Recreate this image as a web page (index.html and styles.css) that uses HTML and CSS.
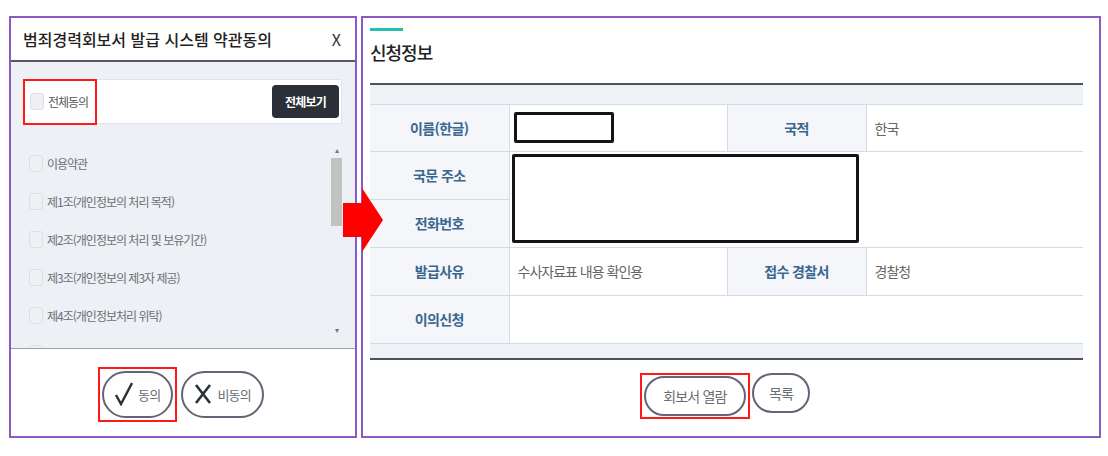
FILE: index.html
```html
<!DOCTYPE html>
<html lang="ko">
<head>
  <meta charset="UTF-8" />
  <meta name="viewport" content="width=device-width, initial-scale=1.0"/>
  <title>범죄경력회보서 발급 시스템</title>
  <link rel="stylesheet" href="styles.css">
</head>
<body>
  <div class="stage">

    <div class="modal">
      <div class="modal-head">
        <h2>범죄경력회보서 발급 시스템 약관동의</h2>
        <span class="close">X</span>
      </div>

      <div class="modal-body">
        <div class="all-box">
          <label class="all-check"><span class="chk"></span>전체동의</label>
          <button class="btn-dark">전체보기</button>
        </div>

        <div class="terms">
          <ul class="terms-list">
            <li><span class="chk"></span>이용약관</li>
            <li><span class="chk"></span>제1조(개인정보의 처리 목적)</li>
            <li><span class="chk"></span>제2조(개인정보의 처리 및 보유기간)</li>
            <li><span class="chk"></span>제3조(개인정보의 제3자 제공)</li>
            <li><span class="chk"></span>제4조(개인정보처리 위탁)</li>
            <li><span class="chk"></span></li>
          </ul>
          <div class="scroll">
            <span class="arr">&#9652;</span>
            <div class="track"><div class="thumb"></div></div>
            <span class="arr">&#9662;</span>
          </div>
        </div>
      </div>

      <div class="modal-foot">
        <div class="hl">
          <button class="pill">
            <svg width="18" height="24" viewBox="0 0 18 24"><path d="M1 13 L6 22 L17 1" fill="none" stroke="#2b2f36" stroke-width="2.4"/></svg>
            동의
          </button>
        </div>
        <button class="pill">
          <svg width="18" height="22" viewBox="0 0 18 22"><path d="M2 2 L16 20 M16 2 L2 20" fill="none" stroke="#2b2f36" stroke-width="2.6"/></svg>
          비동의
        </button>
      </div>
    </div>

    <div class="panel">
      <div class="panel-inner">
        <div class="teal"></div>
        <h3>신청정보</h3>

        <table class="info">
          <colgroup>
            <col class="c-head">
            <col class="c-val">
            <col class="c-head">
            <col class="c-val2">
          </colgroup>
          <tr class="band"><td colspan="4"></td></tr>
          <tr class="r1">
            <th>이름(한글)</th>
            <td><div class="mask small"></div></td>
            <th>국적</th>
            <td>한국</td>
          </tr>
          <tr>
            <th>국문 주소</th>
            <td colspan="3" rowspan="2" class="merged"><div class="mask big"></div></td>
          </tr>
          <tr>
            <th>전화번호</th>
          </tr>
          <tr>
            <th>발급사유</th>
            <td>수사자료표 내용 확인용</td>
            <th>접수 경찰서</th>
            <td>경찰청</td>
          </tr>
          <tr>
            <th>이의신청</th>
            <td colspan="3"></td>
          </tr>
          <tr class="band bottom"><td colspan="4"></td></tr>
        </table>

        <div class="actions">
          <div class="hl">
            <button class="pill wide">회보서 열람</button>
          </div>
          <button class="pill">목록</button>
        </div>
      </div>
    </div>

    <svg class="arrow" width="41" height="64" viewBox="0 0 41 64">
      <polygon points="0,15 19,15 19,0 40,32 19,64 19,49 0,49" fill="#ff0000"/>
    </svg>
  </div>
</body>
</html>
```

FILE: styles.css
```css
* {
  box-sizing: border-box;
  margin: 0;
  padding: 0;
  font-family: "Noto Sans CJK KR", "Noto Sans", sans-serif;
}

body {
  background-color: white;
  width: 1108px;
  height: 456px;
  overflow: hidden;
}

.stage {
  position: relative;
  display: flex;
  gap: 4px;
  padding: 16px 0 0 9px;
}

/* left : terms modal */

.modal {
  width: 348px;
  height: 422px;
  border: 2px solid #8c58c2;
  display: flex;
  flex-direction: column;
}

.modal-head {
  height: 44px;
  display: flex;
  align-items: center;
  justify-content: space-between;
  padding: 0 14px 0 12px;
  border-bottom: 2px solid #555a60;
}

.modal-head h2 {
  font-size: 16px;
  font-weight: 500;
  letter-spacing: 0;
  color: #222;
}

.close {
  font-size: 16px;
  color: #333;
}

.modal-body {
  flex: 1;
  background-color: #edf0f5;
  padding: 17px 13px 0;
  border-bottom: 1px solid #9aa0a8;
}

.all-box {
  height: 45px;
  background-color: white;
  border: 1px solid #dde3ec;
  display: flex;
  align-items: center;
  justify-content: space-between;
  padding-right: 2px;
}

.all-check {
  display: flex;
  align-items: center;
  gap: 4px;
  height: 46px;
  width: 74px;
  margin-left: -2px;
  padding-left: 5px;
  border: 2px solid #ff1a1a;
  font-size: 12px;
  color: #555;
  letter-spacing: -1px;
}

.chk {
  display: inline-block;
  width: 14px;
  height: 17px;
  background-color: #eef0f3;
  border: 1px solid #dcdfe4;
  border-radius: 3px;
  flex-shrink: 0;
}

.btn-dark {
  width: 67px;
  height: 33px;
  border: none;
  border-radius: 4px;
  background-color: #2b2f38;
  color: white;
  font-size: 12px;
  font-weight: bold;
  letter-spacing: -0.8px;
}

.terms {
  margin-top: 20px;
  height: 204px;
  display: flex;
  overflow: hidden;
}

.terms-list {
  flex: 1;
  list-style: none;
  padding-left: 5px;
}

.terms-list li {
  height: 38px;
  display: flex;
  align-items: center;
  gap: 4px;
  font-size: 12px;
  color: #6d6f73;
  letter-spacing: -1px;
}

.scroll {
  width: 11px;
  height: 192px;
  display: flex;
  flex-direction: column;
  align-items: center;
}

.arr {
  font-size: 8px;
  line-height: 12px;
  color: #777;
}

.track {
  flex: 1;
  width: 100%;
  padding-top: 2px;
}

.thumb {
  width: 100%;
  height: 68px;
  background-color: #c2c2c2;
}

.modal-foot {
  flex: 1;
  display: flex;
  align-items: center;
  justify-content: center;
  gap: 4px;
  padding: 3px 4px 0 0;
}

.hl {
  border: 2px solid #ff1a1a;
  padding: 2px;
}

.pill {
  height: 47px;
  padding: 0 11px;
  border: 2px solid #5f6675;
  border-radius: 24px;
  background-color: white;
  display: flex;
  align-items: center;
  gap: 5px;
  font-size: 13px;
  color: #6a6d72;
  letter-spacing: -0.8px;
}

/* right : application info */

.panel {
  width: 740px;
  height: 422px;
  border: 2px solid #8c58c2;
}

.panel-inner {
  padding: 10px 16px 0 7px;
}

.teal {
  width: 33px;
  height: 3px;
  background-color: #26bfae;
}

.panel-inner h3 {
  margin-top: 8px;
  font-size: 18px;
  font-weight: 500;
  line-height: 26px;
  letter-spacing: -1px;
  color: #222;
}

.info {
  margin-top: 18px;
  width: 713px;
  border-collapse: collapse;
  table-layout: fixed;
  border-top: 2px solid #4e5256;
  border-bottom: 2px solid #4e5256;
}

.c-head {
  width: 139px;
}

.c-val {
  width: 218px;
}

.c-val2 {
  width: 217px;
}

.info th,
.info td {
  height: 48px;
  border-bottom: 1px solid #d3dbe7;
  font-size: 14px;
  letter-spacing: -1px;
}

.info th {
  background-color: #f4f6f9;
  color: #3b6690;
  font-weight: bold;
  letter-spacing: -0.6px;
  border-right: 1px solid #d3dbe7;
}

.info td {
  color: #666;
  padding-left: 8px;
  border-right: 1px solid #d3dbe7;
}

.info td:last-child {
  border-right: none;
}

.info .r1 th,
.info .r1 td {
  height: 47px;
}

.info tr.band td {
  height: 20px;
  padding: 0;
  background-color: #eef1f6;
}

.info tr.bottom td {
  height: 16px;
  border-bottom: none;
}

.info td.merged {
  padding: 2px 0 2px 2px;
  vertical-align: top;
  border-right: none;
}

.mask {
  border: 3px solid #141414;
  border-radius: 2px;
  background-color: white;
}

.mask.small {
  width: 100px;
  height: 31px;
  margin-left: -4px;
}

.mask.big {
  width: 347px;
  height: 89px;
}

.actions {
  margin-top: 13px;
  width: 713px;
  display: flex;
  justify-content: center;
  gap: 2px;
  padding-right: 3px;
}

.actions .pill {
  height: 40px;
  padding: 0 15px;
  font-size: 14px;
}

.actions .pill.wide {
  width: 102px;
  justify-content: center;
}

.actions .hl {
  padding: 1px 2px;
}

.arrow {
  position: absolute;
  left: 343px;
  top: 188px;
}
```
